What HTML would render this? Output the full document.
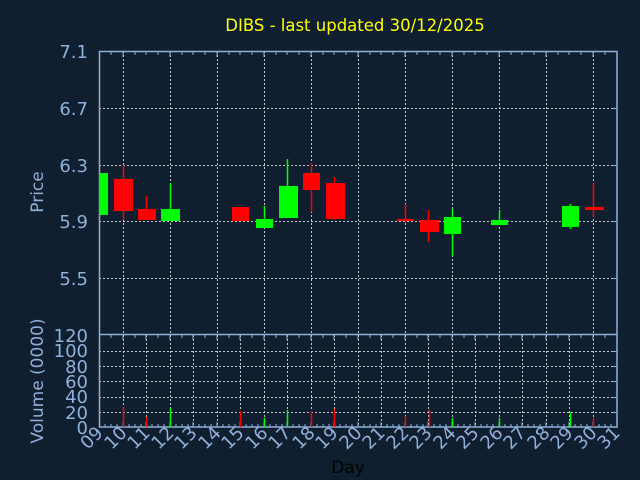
<!DOCTYPE html>
<html><head><meta charset="utf-8"><style>
html,body{margin:0;padding:0;background:#0f1f30;}
svg{display:block;}
text{font-family:"DejaVu Sans","Liberation Sans",sans-serif;}
</style></head><body>
<svg width="640" height="480" viewBox="0 0 640 480" xmlns="http://www.w3.org/2000/svg">
<rect width="640" height="480" fill="#0f1f30"/>
<text x="355" y="31" fill="#ffff00" font-size="16.5" text-anchor="middle">DIBS - last updated 30/12/2025</text>
<g stroke="#c8c8c8" stroke-width="1" stroke-dasharray="2,2" fill="none">
<path d="M99 108.5H617M99 165.5H617M99 221.5H617M99 278.5H617"/>
<path d="M123.5 51V334M170.5 51V334M217.5 51V334M264.5 51V334M311.5 51V334M358.5 51V334M405.5 51V334M452.5 51V334M499.5 51V334M546.5 51V334M593.5 51V334"/>
<path d="M99 412.5H617M99 397.5H617M99 381.5H617M99 366.5H617M99 351.5H617"/>
<path d="M123.5 335V427M146.5 335V427M170.5 335V427M193.5 335V427M217.5 335V427M240.5 335V427M264.5 335V427M287.5 335V427M311.5 335V427M334.5 335V427M358.5 335V427M381.5 335V427M405.5 335V427M428.5 335V427M452.5 335V427M475.5 335V427M499.5 335V427M522.5 335V427M546.5 335V427M569.5 335V427M593.5 335V427"/>
</g>
<g stroke="#8fb0d8" stroke-width="1.5" fill="none">
<rect x="99.5" y="51.5" width="517.5" height="375.5"/>
<path d="M99 334.5H617"/>
</g>
<g stroke="#8fb0d8" stroke-width="1">
<path d="M111 52v3M123 52v5M135 52v3M146 52v3M158 52v3M170 52v5M182 52v3M193 52v3M205 52v3M217 52v5M229 52v3M240 52v3M252 52v3M264 52v5M276 52v3M287 52v3M299 52v3M311 52v5M323 52v3M334 52v3M346 52v3M358 52v5M370 52v3M381 52v3M393 52v3M405 52v5M417 52v3M428 52v3M440 52v3M452 52v5M464 52v3M475 52v3M487 52v3M499 52v5M511 52v3M522 52v3M534 52v3M546 52v5M558 52v3M569 52v3M581 52v3M593 52v5M605 52v3"/>
<path d="M111 335v3M123 335v5M135 335v3M146 335v5M158 335v3M170 335v5M182 335v3M193 335v5M205 335v3M217 335v5M229 335v3M240 335v5M252 335v3M264 335v5M276 335v3M287 335v5M299 335v3M311 335v5M323 335v3M334 335v5M346 335v3M358 335v5M370 335v3M381 335v5M393 335v3M405 335v5M417 335v3M428 335v5M440 335v3M452 335v5M464 335v3M475 335v5M487 335v3M499 335v5M511 335v3M522 335v5M534 335v3M546 335v5M558 335v3M569 335v5M581 335v3M593 335v5M605 335v3"/>
<path d="M105 427v-3M111 427v-3M117 427v-3M123 427v-5M129 427v-3M135 427v-3M141 427v-3M146 427v-5M152 427v-3M158 427v-3M164 427v-3M170 427v-5M176 427v-3M182 427v-3M188 427v-3M193 427v-5M199 427v-3M205 427v-3M211 427v-3M217 427v-5M223 427v-3M229 427v-3M235 427v-3M240 427v-5M246 427v-3M252 427v-3M258 427v-3M264 427v-5M270 427v-3M276 427v-3M282 427v-3M287 427v-5M293 427v-3M299 427v-3M305 427v-3M311 427v-5M317 427v-3M323 427v-3M329 427v-3M334 427v-5M340 427v-3M346 427v-3M352 427v-3M358 427v-5M364 427v-3M370 427v-3M376 427v-3M381 427v-5M387 427v-3M393 427v-3M399 427v-3M405 427v-5M411 427v-3M417 427v-3M423 427v-3M428 427v-5M434 427v-3M440 427v-3M446 427v-3M452 427v-5M458 427v-3M464 427v-3M470 427v-3M475 427v-5M481 427v-3M487 427v-3M493 427v-3M499 427v-5M505 427v-3M511 427v-3M517 427v-3M522 427v-5M528 427v-3M534 427v-3M540 427v-3M546 427v-5M552 427v-3M558 427v-3M564 427v-3M569 427v-5M575 427v-3M581 427v-3M587 427v-3M593 427v-5M599 427v-3M605 427v-3M611 427v-3"/>
<path d="M612 108.5h5M612 165.5h5M612 221.5h5M612 278.5h5M612 412.5h5M612 397.5h5M612 381.5h5M612 366.5h5M612 351.5h5"/>
</g>
<g stroke-width="1.5">
<path stroke="#ff0000" d="M123.5 165V220M146.5 196V220M311.5 163V212M334.5 177V220M405.5 204V222M428.5 210V242M593.5 183V217"/>
<path stroke="#00ff00" d="M170.5 183V221M264.5 206V228M287.5 159V218M452.5 209V256M499.5 210V225M570.5 204V229"/>
</g>
<g fill="#ff0000">
<rect x="114" y="179" width="19" height="32"/>
<rect x="138" y="209" width="18" height="11"/>
<rect x="232" y="207" width="17" height="14"/>
<rect x="303" y="173" width="17" height="17"/>
<rect x="326" y="183" width="19" height="36"/>
<rect x="397" y="219" width="17" height="2"/>
<rect x="420" y="220" width="19" height="12"/>
<rect x="585" y="207" width="19" height="3"/>
</g>
<g fill="#00ff00">
<rect x="99" y="173" width="9" height="42"/>
<rect x="161" y="209" width="19" height="12"/>
<rect x="256" y="219" width="17" height="9"/>
<rect x="279" y="186" width="19" height="32"/>
<rect x="444" y="217" width="17" height="17"/>
<rect x="491" y="220" width="17" height="5"/>
<rect x="562" y="206" width="17" height="21"/>
</g>
<g stroke-width="1.5">
<path stroke="#ff0000" d="M123.5 407V427M146.5 417V427M240.5 411V427M311.5 411V427M334.5 409V427M405.5 416V427M429.5 410V427M593.5 418V427"/>
<path stroke="#00ff00" d="M170.5 408V427M264.5 418V427M287.5 410V427M452.5 418V427M499.5 418V427M570.5 412V427"/>
</g>
<g fill="#8fb0d8" font-size="18" text-anchor="end">
<text x="88" y="58">7.1</text>
<text x="88" y="115">6.7</text>
<text x="88" y="172">6.3</text>
<text x="88" y="228">5.9</text>
<text x="88" y="285">5.5</text>
<text x="88" y="342">120</text>
<text x="88" y="357">100</text>
<text x="88" y="373">80</text>
<text x="88" y="388">60</text>
<text x="88" y="403">40</text>
<text x="88" y="419">20</text>
<text x="88" y="434">0</text>
</g>
<text transform="translate(43 192) rotate(-90)" fill="#8fb0d8" font-size="17" text-anchor="middle">Price</text>
<text transform="translate(43 381) rotate(-90)" fill="#8fb0d8" font-size="17" text-anchor="middle">Volume (0000)</text>
<g fill="#8fb0d8" font-size="18" text-anchor="end">
<text transform="translate(104 434) rotate(-45)">09</text>
<text transform="translate(128 434) rotate(-45)">10</text>
<text transform="translate(151 434) rotate(-45)">11</text>
<text transform="translate(175 434) rotate(-45)">12</text>
<text transform="translate(198 434) rotate(-45)">13</text>
<text transform="translate(222 434) rotate(-45)">14</text>
<text transform="translate(245 434) rotate(-45)">15</text>
<text transform="translate(269 434) rotate(-45)">16</text>
<text transform="translate(292 434) rotate(-45)">17</text>
<text transform="translate(316 434) rotate(-45)">18</text>
<text transform="translate(339 434) rotate(-45)">19</text>
<text transform="translate(363 434) rotate(-45)">20</text>
<text transform="translate(386 434) rotate(-45)">21</text>
<text transform="translate(410 434) rotate(-45)">22</text>
<text transform="translate(433 434) rotate(-45)">23</text>
<text transform="translate(457 434) rotate(-45)">24</text>
<text transform="translate(480 434) rotate(-45)">25</text>
<text transform="translate(504 434) rotate(-45)">26</text>
<text transform="translate(527 434) rotate(-45)">27</text>
<text transform="translate(551 434) rotate(-45)">28</text>
<text transform="translate(574 434) rotate(-45)">29</text>
<text transform="translate(598 434) rotate(-45)">30</text>
<text transform="translate(621 434) rotate(-45)">31</text>
</g>
<text x="348" y="473" fill="#000000" font-size="17" text-anchor="middle">Day</text>
</svg>
</body></html>
